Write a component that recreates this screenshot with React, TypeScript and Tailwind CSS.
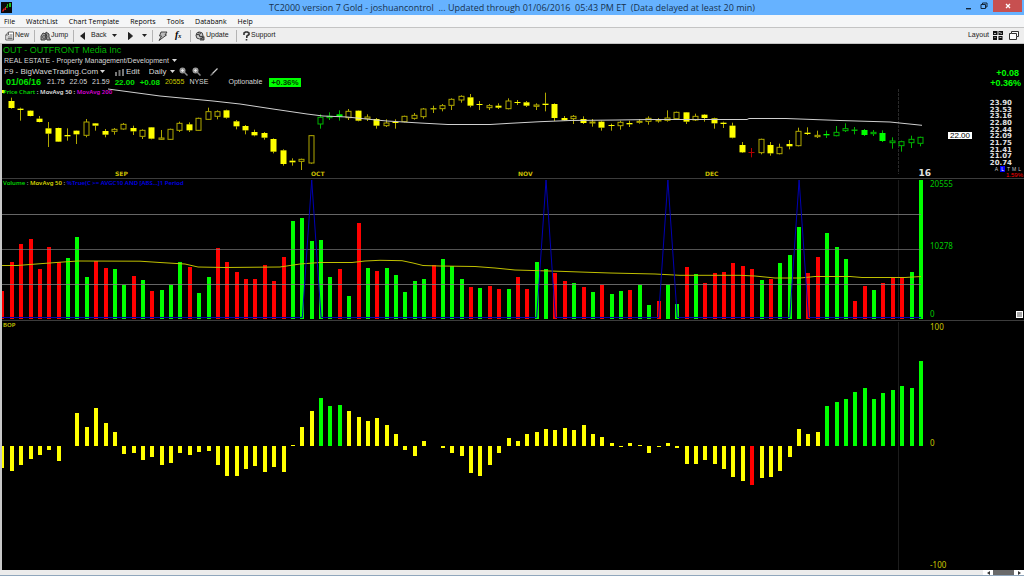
import React, { useState } from 'react';

const STEP = 9.373;
const FIRST_X = 2.4;
const barX = (i: number) => FIRST_X + STEP * i;

type CandleKind = 'fill' | 'open' | 'greenFill' | 'greenOpen' | 'red';
// high, body top, body bottom, low, kind (three ticks per pixel)
type Candle = [number, number, number, number, CandleKind?];

// The first session is scrolled off the left edge
const candles: Candle[] = [
  [38, 48, 69, 71], [68, 71, 75, 107], [76, 77, 93, 94], [93, 101, 111, 112], [111, 130, 146, 186],
  [128, 129, 170, 171], [130, 150, 154, 167], [136, 137, 148, 177], [102, 111, 151, 157, 'open'], [114, 115, 122, 137],
  [132, 138, 149, 157], [129, 133, 139, 149, 'open'], [114, 118, 132, 134, 'open'], [122, 129, 139, 150], [133, 136, 154, 162, 'open'],
  [126, 127, 161, 163], [135, 159, 163, 165, 'open'], [131, 133, 163, 165, 'open'], [110, 115, 136, 141, 'open'], [112, 118, 136, 141],
  [98, 100, 136, 137, 'open'], [68, 80, 103, 105, 'open'], [76, 80, 94, 103, 'open'], [74, 76, 98, 101], [105, 109, 124, 133],
  [120, 123, 136, 148], [134, 141, 151, 154], [141, 144, 158, 164], [160, 162, 200, 205], [193, 196, 237, 242],
  [220, 227, 232, 242], [221, 223, 229, 255, 'open'], [150, 152, 234, 236, 'open'], [88, 97, 117, 131, 'greenOpen'], [82, 94, 98, 105, 'greenOpen'],
  [76, 88, 95, 107, 'greenFill'], [72, 79, 98, 105, 'open'], [76, 77, 107, 109], [88, 96, 101, 108, 'open'], [99, 102, 122, 131],
  [103, 114, 122, 126, 'open'], [103, 111, 114, 131], [92, 94, 110, 112, 'open'], [84, 91, 100, 104, 'open'], [69, 72, 95, 101, 'open'],
  [62, 70, 73, 84], [57, 62, 71, 79, 'open'], [40, 43, 61, 75, 'open'], [31, 34, 45, 53, 'open'], [27, 37, 62, 67],
  [48, 57, 59, 75], [57, 62, 68, 75, 'open'], [55, 62, 68, 72], [40, 48, 71, 73, 'open'], [45, 51, 54, 60],
  [48, 52, 62, 66], [55, 60, 64, 75, 'open'], [23, 56, 60, 79], [55, 57, 99, 108], [93, 99, 106, 108],
  [90, 94, 101, 117, 'open'], [94, 102, 114, 117], [102, 111, 114, 125, 'open'], [107, 110, 128, 137], [116, 120, 123, 137],
  [107, 112, 122, 134, 'open'], [107, 114, 118, 126], [102, 109, 112, 116, 'open'], [94, 100, 109, 119, 'open'], [99, 105, 107, 113, 'open'],
  [76, 99, 106, 110, 'open'], [80, 82, 101, 102, 'open'], [81, 82, 110, 117], [86, 94, 105, 108, 'open'], [87, 89, 99, 110],
  [98, 100, 115, 131], [110, 113, 117, 129], [113, 122, 158, 160], [171, 180, 202, 204], [189, 201, 204, 217, 'red'],
  [161, 163, 203, 208, 'open'], [171, 180, 205, 212], [176, 187, 206, 208, 'open'], [165, 177, 184, 193], [128, 139, 182, 184, 'open'],
  [127, 143, 147, 150], [137, 151, 155, 159, 'open'], [137, 147, 151, 159, 'greenFill'], [123, 142, 152, 154, 'greenOpen'], [115, 131, 137, 141, 'greenOpen'],
  [126, 134, 137, 148, 'greenFill'], [132, 135, 150, 153, 'greenFill'], [135, 142, 146, 153, 'greenOpen'], [136, 144, 168, 171, 'greenFill'], [157, 168, 173, 191, 'greenOpen'],
  [167, 170, 182, 200, 'greenOpen'], [152, 163, 173, 189, 'greenOpen'], [155, 157, 175, 184, 'greenOpen'],
];

const volumes = [
  28, 57, 75, 80, 50, 72, 57, 61, 82, 42, 58, 51, 50, 34, 43, 39, 28, 29, 34, 57,
  52, 26, 42, 71, 57, 47, 40, 40, 54, 38, 62, 98, 101, 78, 79, 42, 50, 23, 96, 51,
  48, 51, 44, 27, 38, 40, 54, 60, 53, 40, 32, 31, 33, 30, 30, 42, 30, 57, 50, 46,
  38, 36, 32, 27, 34, 25, 28, 29, 34, 14, 18, 34, 15, 52, 45, 36, 46, 47, 56, 53,
  50, 39, 40, 56, 64, 92, 46, 62, 86, 72, 60, 18, 33, 29, 36, 41, 42, 47, 139,
];

const downDays = [
  0, 1, 2, 3, 4, 5, 6, 10, 11, 14, 16, 20, 23, 24, 25, 26, 27, 28, 29, 30, 36, 38, 40, 46, 50, 52, 53, 55, 56,
  59, 60, 62, 64, 67, 70, 73, 75, 76, 77, 78, 79, 80, 82, 86, 87, 91, 92, 94, 95, 96,
];

const bop = [
  -22, -25, -19, -13, -9, -4, -15, 0, 33, 19, 38, 23, 14, -8, -7, -14, -11, -19, -17, -7,
  -9, -6, -5, -19, -30, -30, -23, -20, -26, -21, -26, 1, 19, 35, 48, 40, 41, 35, 29, 25,
  28, 21, 12, -4, -10, 5, 0, -2, -7, -10, -27, -30, -19, -7, 8, 5, 12, 14, 17, 16,
  18, 16, 21, 12, 9, 3, -1, 3, 1, -7, -1, 3, -2, -18, -18, -14, -18, -23, -31, -35,
  -39, -32, -31, -25, -11, 17, 12, 14, 40, 44, 47, 54, 58, 47, 53, 56, 60, 58, 85,
];

const signals = [33, 58, 71, 85];
const priceScale = ['23.90', '23.53', '23.16', '22.80', '22.44', '22.09', '21.75', '21.41', '21.07', '20.74'];
const months = [
  { label: 'SEP', x: 113 },
  { label: 'OCT', x: 309 },
  { label: 'NOV', x: 516 },
  { label: 'DEC', x: 703 },
];
const menuItems = ['File', 'WatchList', 'Chart Template', 'Reports', 'Tools', 'Databank', 'Help'];

const bopColor = (v: number) => {
  if (v >= 40) return '#00ff00';
  if (v <= -39) return '#ff0000';
  return '#ffff00';
};

const Caret: React.FC<{ className?: string }> = ({ className = '' }) => (
  <svg viewBox="0 0 5 3" className={`h-[3px] w-[5px] shrink-0 ${className}`} aria-hidden="true">
    <path d="M0 0h5L2.5 3z" fill="currentColor" />
  </svg>
);

const Separator = () => <span className="h-3 w-px bg-[#b4b4b4]" />;

const TitleBar = () => (
  <header className="relative flex h-[15px] shrink-0 items-center justify-center bg-[#66b2ff]">
    <svg viewBox="0 0 11 11" className="absolute left-[1px] top-[2px] size-[11px]" aria-hidden="true">
      <rect width="11" height="11" fill="#0a0a0a" />
      <path d="M6 2h1v3H6zM8 1h2v4H8z" fill="#19c319" />
      <path d="M1 9l2-3 1 1-2 3zM4 5h1v3H4z" fill="#e02020" />
      <path d="M5 4h2v2H5z" fill="#138a13" />
    </svg>
    <h1 className="whitespace-pre font-['Open_Sans',sans-serif] text-[9px] leading-[15px] text-[#17334f]">
      TC2000 version 7 Gold - joshuancontrol  ... Updated through 01/06/2016  05:43 PM ET  (Data delayed at least 20 min)
    </h1>
    <div className="absolute right-[2px] top-0 flex h-3 items-center">
      <button aria-label="Minimize" className="flex w-4 justify-center">
        <svg viewBox="0 0 7 7" className="size-[7px]"><path d="M1 5h5v1.4H1z" fill="#12263a" /></svg>
      </button>
      <button aria-label="Restore" className="mr-[1px] flex w-4 justify-center">
        <svg viewBox="0 0 8 8" className="size-2" fill="none" stroke="#12263a">
          <path d="M1 2.5h4.5v4H1zM2.5 2V1H7v4H6" />
        </svg>
      </button>
      <button aria-label="Close" className="flex h-3 w-[29px] items-center justify-center bg-[#c75050]">
        <svg viewBox="0 0 6 6" className="size-[6px]" stroke="#fff" strokeWidth="1.3"><path d="M1 1l4 4M5 1L1 5" /></svg>
      </button>
    </div>
  </header>
);

const MenuBar = () => (
  <nav className="flex h-3 shrink-0 items-end gap-[11px] bg-[#f5f6f7] pl-1 font-['Open_Sans',sans-serif] text-[7px] font-medium text-black">
    {menuItems.map((item) => (
      <button key={item} className="leading-[11px]">{item}</button>
    ))}
  </nav>
);

const Toolbar = () => (
  <div className="flex h-[17px] shrink-0 items-center border-y border-[#c4c4c4] bg-[#eeeeee] pl-[5px] font-['Liberation_Sans',Arial,sans-serif] text-[7px] text-[#222]">
    <button className="flex w-[29px] items-center">
      <svg viewBox="0 0 10 10" className="size-[10px] shrink-0" fill="#fff" stroke="#555" strokeWidth=".9">
        <path d="M3.5 1h5v8H.8V4zM3.5 1v3H.8" />
        <path d="M4.5 4h3M2.5 6h5M2.5 7.6h5" />
      </svg>
      New
    </button>
    <Separator />
    <button className="ml-[5px] flex w-[33px] items-center">
      <svg viewBox="0 0 11 10" className="h-[10px] w-[11px] shrink-0" fill="#999" stroke="#333" strokeWidth=".9">
        <path d="M1 5l2-3 3 1 1 3-2 3H1zM6 1l3 2v3l1.5 3H7L5.5 6z" />
        <circle cx="4" cy="6" r="1.3" fill="#eee" />
      </svg>
      Jump
    </button>
    <Separator />
    <button className="ml-[6px] flex w-[28px] items-center gap-[6px]">
      <svg viewBox="0 0 5 8" className="h-2 w-[5px]"><path d="M5 0v8L0 4z" fill="#222" /></svg>
      Back
    </button>
    <button aria-label="Back history" className="flex w-[20px] items-center pl-[4px]"><Caret /></button>
    <button aria-label="Forward" className="flex w-[14px] items-center">
      <svg viewBox="0 0 5 8" className="h-2 w-[5px]"><path d="M.5.5v7l4-3.5z" fill="#222" stroke="#222" /></svg>
    </button>
    <button aria-label="Forward history" className="flex w-[10px] items-center"><Caret /></button>
    <Separator />
    <button aria-label="Quick action" className="ml-[5px] w-[17px]">
      <svg viewBox="0 0 10 10" className="size-[10px]" fill="#bbb" stroke="#333" strokeWidth=".9">
        <path d="M3 1h6L7 4h1.5L1 9.5 3.5 5H1.5z" />
      </svg>
    </button>
    <button aria-label="Formula" className="w-[15px] text-left font-['Liberation_Serif',serif] text-[10px] font-bold italic leading-[10px] text-black">
      f<span className="text-[6px]">x</span>
    </button>
    <Separator />
    <button className="ml-[4px] flex w-[41px] items-center gap-[1px]">
      <svg viewBox="0 0 10 10" className="size-[10px] shrink-0" fill="#ccc" stroke="#333" strokeWidth=".9">
        <circle cx="4.5" cy="4.5" r="3.5" />
        <path d="M1 4l3-1 1 3 3-1M3 1l3 2M5 9h4V5.5L5.5 8" fill="#777" />
      </svg>
      Update
    </button>
    <Separator />
    <button className="ml-[6px] flex items-center gap-[1px]">
      <svg viewBox="0 0 7 10" className="h-[10px] w-[7px] shrink-0" fill="none" stroke="#333" strokeWidth="1.6">
        <path d="M1 4V2l1.5-1h2L6 2v1.5L3.8 5.2V7M3.5 8v1.6" />
      </svg>
      Support
    </button>
    <div className="ml-auto flex items-center gap-[4px] pr-[5px]">
      <button>Layout</button>
      <button aria-label="Layout grid">
        <svg viewBox="0 0 10 9" className="h-[9px] w-[10px]" fill="#111">
          <path d="M0 0h4.5v4H0zM5.5 0H10v4H5.5zM0 5h4v4H0zM5.5 5h4v4h-4z" />
          <path d="M1 2.5h2M6 1.5l3 1M1.5 6.5h1M6.5 6.5h2" stroke="#ddd" strokeWidth=".8" />
        </svg>
      </button>
      <button aria-label="Float window" className="ml-[2px]">
        <svg viewBox="0 0 10 9" className="h-[9px] w-[10px]" fill="#fff" stroke="#333">
          <path d="M2.5.5h7v5h-2v3h-7v-6h2z" />
          <path d="M2.5 2.5h5v3" />
        </svg>
      </button>
    </div>
  </div>
);

const SymbolHeader = () => {
  const [scan, setScan] = useState('F9 - BigWaveTrading.Com');
  const [period, setPeriod] = useState('Daily');

  return (
    <section className="flex h-[43px] shrink-0 justify-between pl-px pr-[3px] font-['Liberation_Sans',Arial,sans-serif] text-[8px] text-[#d8d8d8]">
      <div>
        <h2 className="text-[9px] leading-[10px] text-[#00b400]">OUT - OUTFRONT Media Inc</h2>
        <button className="flex items-center gap-[3px] pl-px text-[7px] leading-[11px]">
          REAL ESTATE - Property Management/Development
          <Caret />
        </button>
        <div className="flex h-[11px] items-center pl-px">
          <select
            aria-label="Chart layout"
            value={scan}
            onChange={(e) => setScan(e.target.value)}
            className="appearance-none bg-transparent leading-[11px] outline-none"
          >
            <option>F9 - BigWaveTrading.Com</option>
          </select>
          <Caret className="ml-px" />
          <button className="ml-[10px] flex items-center gap-[2px]">
            <svg viewBox="0 0 9 8" className="h-2 w-[9px]" fill="#777">
              <path d="M0 4h2v4H0zM3.5 2h2v6h-2zM7 1h2v7H7z" />
            </svg>
            Edit
          </button>
          <select
            aria-label="Time frame"
            value={period}
            onChange={(e) => setPeriod(e.target.value)}
            className="ml-[9px] appearance-none bg-transparent leading-[11px] outline-none"
          >
            <option>Daily</option>
          </select>
          <Caret className="ml-[3px]" />
          {['Zoom in', 'Zoom out'].map((label) => (
            <button key={label} aria-label={label} className="ml-[4px]">
              <svg viewBox="0 0 9 9" className="size-[9px]">
                <path d="M5.5 5.5l3 3" stroke="#888" strokeWidth="1.5" />
                <circle cx="3.5" cy="3.5" r="3" fill="#999" />
                <path d="M2 3.5h3M3.5 2v3" stroke="#eee" strokeWidth=".8" />
              </svg>
            </button>
          ))}
          <button aria-label="Draw line" className="ml-[9px]">
            <svg viewBox="0 0 8 8" className="size-2">
              <path d="M2 6l5.5-5.5" stroke="#ccc" strokeWidth="1.3" />
              <path d="M.5 7.5L3 5.5" stroke="#777" strokeWidth="1.3" />
            </svg>
          </button>
        </div>
        <div className="flex h-[11px] items-center gap-[5px] pl-[3px] text-[7px]">
          <span className="text-[9px] font-bold text-[#00e600]">01/06/16</span>
          <span className="ml-px">21.75</span>
          <span>22.05</span>
          <span>21.59</span>
          <span className="text-[8px] font-bold text-[#00e600]">22.00</span>
          <span className="text-[8px] font-bold text-[#00e600]">+0.08</span>
          <span className="text-[#c8c800]">20555</span>
          <span>NYSE</span>
          <span className="ml-[15px]">Optionable</span>
          <span className="ml-[2px] bg-[#00ff00] px-[2px] text-[8px] font-bold leading-[9px] text-[#003c00]">+0.36%</span>
        </div>
      </div>
      <div className="pt-[23px] text-right text-[9px] font-bold leading-[10px] text-[#00ff00]">
        <p className="pr-[2px]">+0.08</p>
        <p>+0.36%</p>
      </div>
    </section>
  );
};

const PriceChart = () => (
  <svg viewBox="2 88 924 90" preserveAspectRatio="none" className="block h-full w-full">
    <path d="M898.5 89v85" stroke="#2a2a2a" strokeDasharray="3 1" />
    <path d="M2 90h3v3H2z" fill="#ffff00" />
    {candles.map(([high, top, bottom, low, kind = 'fill'], index) => {
      const x = Math.round(barX(index + 1)) - 0.5;
      const y = (v: number) => 85 + v / 3;
      const green = kind === 'greenFill' || kind === 'greenOpen';
      const hollow = kind === 'open' || kind === 'greenOpen';
      const line = kind === 'red' ? '#b40000' : green ? '#00b400' : '#b0a800';
      const solid = kind === 'red' ? '#b40000' : green ? '#00ff00' : '#ffff00';
      const bodyHeight = Math.max(1, (bottom - top) / 3);
      return (
        <g key={index}>
          <path d={`M${x} ${y(high)}V${y(top)}M${x} ${y(bottom)}V${y(low)}`} stroke={line} />
          <rect
            x={hollow ? x - 2.5 : x - 3}
            y={y(top)}
            width={hollow ? 5 : 6}
            height={bodyHeight}
            fill={hollow ? '#000' : solid}
            stroke={hollow ? line : 'none'}
          />
        </g>
      );
    })}
    <polyline
      fill="none"
      stroke="#d0d0d0"
      points="108,89 160,96 213,101 240,104 273,109 307,114 323,116 347,117 373,119.7 387,121 420,123 448,124.5 490,124.5 510,123.3 540,121.7 570,120.5 617,120 650,119.5 747,119.5 749,118.5 786,118.5 840,120.5 890,122 922,125.3"
    />
  </svg>
);

const VolumeChart = () => (
  <svg viewBox="2 179 924 141" preserveAspectRatio="none" className="block h-full w-full">
    <path d="M898.5 180v139" stroke="#1c1c1c" />
    {volumes.map((v, i) => (
      <rect key={i} x={Math.round(barX(i)) - 2} y={319 - v} width="4" height={v} fill={downDays.includes(i) ? '#ff0000' : '#00ff00'} />
    ))}
    <path d="M2 214.5H921M2 284.5H921" stroke="#808080" strokeOpacity=".8" />
    <path d="M2 249.5H921" stroke="#808080" strokeOpacity=".65" />
    <polyline
      fill="none"
      stroke="#c0c000"
      points="2,265.5 17,265.5 43,263.5 63,262 78,261 140,261.2 160,262.5 185,264 198,267 225,267.5 280,267 300,264 320,262.5 352,262.5 365,261 380,260.3 402,260.7 413,263 423,265.5 440,266 475,266.5 495,268 515,270 560,271.3 580,272 610,273 655,274 680,275.3 740,275.3 755,276 775,278 800,278 815,276.5 850,276.5 862,277.5 905,277.5 921,276.5"
    />
    <path
      fill="none"
      stroke="#0000b4"
      strokeLinejoin="bevel"
      d={`M2 317.5${signals.map((i) => `H${barX(i - 1)}L${barX(i)} 180L${barX(i + 1)} 317.5`).join('')}H921`}
    />
  </svg>
);

const BopChart = () => (
  <svg viewBox="2 321 924 249" preserveAspectRatio="none" className="block h-full w-full">
    <path d="M898.5 322v248" stroke="#1c1c1c" />
    {bop.map((v, i) => (
      <rect key={i} x={Math.round(barX(i)) - 2} y={v > 0 ? 446 - v : 446} width="4" height={Math.abs(v)} fill={bopColor(v)} />
    ))}
  </svg>
);

const ScrollBar = () => (
  <div className="flex h-[6px] shrink-0 items-stretch border-b border-[#8fa6bc] bg-[#ececec] pl-[2px]">
    <div className="flex-1" />
    <button aria-label="Scroll left" className="flex w-[10px] items-center justify-center bg-white">
      <svg viewBox="0 0 3 4" className="h-1 w-[3px]"><path d="M3 0v4L0 2z" fill="#333" /></svg>
    </button>
    <div className="w-[21px] bg-[#6a6a6a]" />
    <button aria-label="Scroll right" className="flex w-[10px] items-center justify-center bg-white">
      <svg viewBox="0 0 3 4" className="h-1 w-[3px]"><path d="M0 0v4l3-2z" fill="#333" /></svg>
    </button>
  </div>
);

const App = () => {
  return (
    <div className="flex h-screen flex-col overflow-hidden bg-black">
      <TitleBar />
      <MenuBar />
      <Toolbar />

      <main className="flex min-h-0 flex-1 flex-col border-l-2 border-[#c8c8c8] bg-black pt-px font-['Noto_Sans',sans-serif] text-[8px]">
        <SymbolHeader />

        <section className="flex h-[91px] shrink-0 border-b border-[#3c3c3c]">
          <div className="relative min-w-0 flex-1">
            <PriceChart />
            <p className="absolute left-px top-0 whitespace-pre text-[6px] font-semibold leading-[9px] text-[#e0e0e0]">
              <span className="text-[#00d800]">Price Chart</span> : MovAvg 50 : <span className="text-[#d800d8]">MovAvg 200</span>
            </p>
            {months.map((m) => (
              <span
                key={m.label}
                className="absolute bottom-0 font-['DejaVu_Sans',sans-serif] text-[6px] font-bold leading-[9px] text-[#c8be00]"
                style={{ left: `${(m.x / 924) * 100}%` }}
              >
                {m.label}
              </span>
            ))}
            <span className="absolute -right-[5px] bottom-0 font-['DejaVu_Sans',sans-serif] text-[9px] font-bold leading-[9px] text-[#e0e0e0]">16</span>
          </div>
          <div className="flex w-[98px] shrink-0 flex-col items-end pt-[12px]">
            <div className="flex w-full items-center justify-between pl-[22px] pr-[12px]">
              <span className="mt-[5px] bg-white px-[2px] font-['Liberation_Sans',sans-serif] text-[8px] leading-[7px] text-black">22.00</span>
              <ul className="flex h-[66px] flex-col justify-between text-right font-['DejaVu_Sans',sans-serif] text-[7px] font-bold leading-[6px] text-[#e0e0e0]">
                {priceScale.map((p) => (
                  <li key={p}>{p}</li>
                ))}
              </ul>
            </div>
            <div className="flex gap-[2px] pr-[3px] font-['Liberation_Sans',sans-serif] text-[5px] leading-[6px] text-[#c8c8c8]">
              <button>A</button>
              <button className="bg-[#0000ff] px-px text-white">L</button>
              <button>T</button>
              <button>M</button>
              <button>L</button>
            </div>
            <span className="pr-px font-['Liberation_Sans',sans-serif] text-[6px] leading-[6px] text-[#ff0000]">1.59%</span>
          </div>
        </section>

        <section className="flex h-[142px] shrink-0 border-b border-[#3c3c3c]">
          <div className="relative min-w-0 flex-1">
            <VolumeChart />
            <p className="absolute left-px top-0 whitespace-pre text-[6px] font-semibold leading-[9px] text-[#a8a8a8]">
              <span className="text-[#00d800]">Volume</span> : <span className="text-[#d8d800]">MovAvg 50</span> : <span className="text-[#0000e6]">%True(C &gt;= AVGC10 AND [ABS...]1 Period</span>
            </p>
          </div>
          <div className="flex w-[98px] shrink-0 flex-col justify-between pb-px pl-1 leading-[10px] text-[#00c800]">
            <span>20555</span>
            <span className="pb-[6px]">10278</span>
            <div className="flex items-center justify-between">
              <span>0</span>
              <button aria-label="Resize pane" className="mr-px size-[7px] border border-white bg-[#a8a8a8]" />
            </div>
          </div>
        </section>

        <section className="flex min-h-0 flex-1">
          <div className="relative min-w-0 flex-1">
            <BopChart />
            <p className="absolute left-px top-0 text-[6px] font-semibold leading-[9px] text-[#c8c800]">BOP</p>
          </div>
          <div className="flex w-[98px] shrink-0 flex-col justify-between pl-1 pt-px leading-[10px] text-[#c8c800]">
            <span>100</span>
            <span className="pb-[6px]">0</span>
            <span>-100</span>
          </div>
        </section>
      </main>

      <ScrollBar />
    </div>
  );
};

export default App;
